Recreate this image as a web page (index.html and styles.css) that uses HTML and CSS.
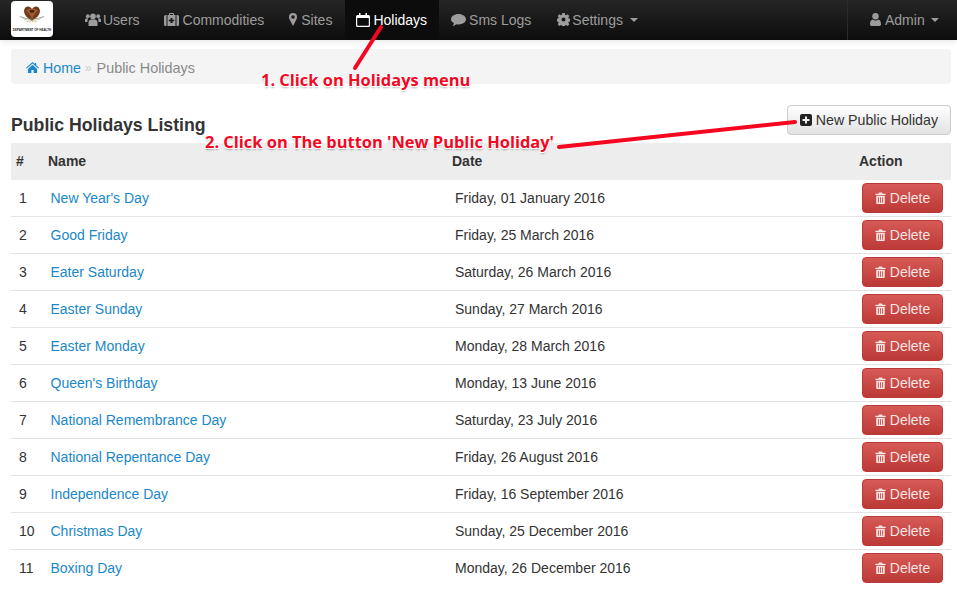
FILE: index.html
```html
<!DOCTYPE html>
<html lang="en">
<head>
<meta charset="utf-8">
<title>Public Holidays</title>
<link rel="stylesheet" href="styles.css">
</head>
<body>
<svg width="0" height="0" class="defs">
  <symbol id="trash" viewBox="0 0 12 14"><path d="M4.3 0.5h3.4l.8 1.5H11.500a.5.5 0 0 1 .5.5V3.500H0V2.500a.5.5 0 0 1 .5-.5H3.500zM1 4.500h10v8.200c0 .8-.5 1.300-1.200 1.300H2.200C1.500 14 1 13.500 1 12.700zM3 6v6.500h1V6zM5.500 6v6.500h1V6zM8 6v6.500h1V6z" fill-rule="evenodd"/></symbol>
</svg>
<nav class="navbar">
  <div class="brand">
    <svg class="crest" viewBox="0 0 42 36" aria-hidden="true">
      <path d="M21 26C14 22 9 17 10 11 11 6 16 5 19 7.500L21 10l2-2.500C26 5 31 6 32 11 33 17 28 22 21 26z" fill="#6e3a20"/>
      <path d="M13 12c3-4 13-4 16 0-2 2-4 3-5 6l-3 5-3-5c-1-3-3-4-5-6z" fill="#a65a2a"/>
      <path d="M17 11h8l-2 4h-4z" fill="#3c2416"/>
      <path d="M4 20c7 3 12 3.500 17 3.500S31 23 38 20" fill="none" stroke="#77775a" stroke-width="1"/>
      <path d="M8 23c5 2 9 2.500 13 2.500s8-.5 13-2.500" fill="none" stroke="#a8a890" stroke-width=".8"/>
      <path d="M14 27.500h14" stroke="#c9b458" stroke-width="1.500" stroke-dasharray="1.500 .8"/>
    </svg>
    <span class="crest-text">DEPARTMENT OF HEALTH</span>
  </div>
  <ul class="nav-left">
    <li><a class="nav-link" href="#"><svg class="ic ic-users" viewBox="0 0 16 13"><circle cx="8" cy="3.400" r="2.800"/><circle cx="2.800" cy="3.200" r="1.900"/><circle cx="13.200" cy="3.200" r="1.900"/><path d="M3.500 13V9.500C3.500 7.500 5 6.500 6 6.500h4c1 0 2.500 1 2.500 3V13zM0 9V7c0-1 .8-1.700 1.700-1.700h1.500C2.600 6.200 2.500 7.500 2.500 9zM16 9V7c0-1-.8-1.700-1.700-1.700h-1.500c.6.900.7 2.200.7 3.700z"/></svg>Users</a></li>
    <li><a class="nav-link wide-1" href="#"><svg class="ic ic-med" viewBox="0 0 15 13"><path fill-rule="evenodd" d="M5 2V1a1 1 0 0 1 1-1h3a1 1 0 0 1 1 1v1h1.500v11h-8V2zM6 1v1h3V1zM6.500 5v1.700H4.800v1.600h1.700V10h2V8.300h1.700V6.700H8.500V5zM0 3.500A1.500 1.500 0 0 1 1.500 2h1v11h-1A1.500 1.500 0 0 1 0 11.500zM15 3.500A1.500 1.500 0 0 0 13.500 2h-1v11h1a1.500 1.500 0 0 0 1.500-1.500z"/></svg>Commodities</a></li>
    <li><a class="nav-link wide-1" href="#"><svg class="ic ic-pin" viewBox="0 0 8 13"><path fill-rule="evenodd" d="M4 0a4 4 0 0 1 4 4c0 1.500-.5 2.300-1 3.300L4 13 1 7.300C.5 6.300 0 5.500 0 4a4 4 0 0 1 4-4zm0 2.200a1.800 1.800 0 1 0 0 3.600 1.800 1.800 0 0 0 0-3.600z"/></svg>Sites</a></li>
    <li class="active"><a class="nav-link" href="#"><svg class="ic ic-cal" viewBox="0 0 14 14"><path fill-rule="evenodd" d="M3 0h1.500v2h5V0H11v2h1.500A1.500 1.500 0 0 1 14 3.500v9a1.500 1.500 0 0 1-1.500 1.500h-11A1.500 1.500 0 0 1 0 12.500v-9A1.500 1.500 0 0 1 1.500 2H3zM1.200 5v7.300c0 .3.200.5.500.5h10.600c.3 0 .5-.2.500-.5V5z"/></svg>Holidays</a></li>
    <li><a class="nav-link wide-2" href="#"><svg class="ic ic-chat" viewBox="0 0 15 12"><path d="M7.500 0C11.600 0 15 2.300 15 5.200s-3.400 5.200-7.500 5.200c-.8 0-1.500-.1-2.200-.2C4.200 11.200 2.800 11.800 1.500 12c.8-.9 1.300-1.800 1.400-2.900C1.100 8.100 0 6.800 0 5.200 0 2.300 3.400 0 7.500 0z"/></svg>Sms Logs</a></li>
    <li><a class="nav-link" href="#"><svg class="ic ic-cog" viewBox="0 0 14 14"><path fill-rule="evenodd" d="M5.700 0h2.600l.4 2 1.100.5 1.700-1.100 1.800 1.800-1.100 1.700.5 1.100 2 .4v2.600l-2 .4-.5 1.100 1.100 1.700-1.800 1.800-1.700-1.100-1.100.5-.4 2H5.700l-.4-2-1.100-.5-1.700 1.100L.7 12.200l1.100-1.700-.5-1.100-2-.4V6.400l2-.4.5-1.100L.7 3.200 2.500 1.400l1.700 1.100L5.300 2zM7 4.800a2.200 2.200 0 1 0 0 4.400 2.200 2.200 0 0 0 0-4.400z"/></svg>Settings<span class="caret"></span></a></li>
  </ul>
  <div class="nav-right">
    <a class="nav-link" href="#"><svg class="ic ic-user" viewBox="0 0 11 13"><circle cx="5.500" cy="3.300" r="3.200"/><path d="M0 11.300C0 8.500 1 6.800 2.600 6.400 3.300 7.100 4.300 7.500 5.500 7.500s2.200-.4 2.900-1.100C10 6.800 11 8.500 11 11.300c0 1-.7 1.700-1.600 1.700H1.600C.7 13 0 12.300 0 11.300z"/></svg>Admin<span class="caret caret-tight"></span></a>
  </div>
</nav>

<main class="page">
  <div class="breadcrumb">
    <a href="#"><svg class="ic-home" viewBox="0 0 14 12"><path d="M7 0l2.500 2.200V1H11v2.500L14 6.200l-.8.8L7 1.600.8 7 0 6.200zM2 7.500 7 3l5 4.500V12H8.200V8.700H5.800V12H2z"/></svg>Home</a>
    <span class="sep">»</span>
    <span class="current">Public Holidays</span>
  </div>

  <div class="title-row">
    <h1>Public Holidays Listing</h1>
    <a class="btn btn-new" href="#"><svg class="ic-plus" viewBox="0 0 12 12"><path fill-rule="evenodd" d="M2 0h8a2 2 0 0 1 2 2v8a2 2 0 0 1-2 2H2a2 2 0 0 1-2-2V2a2 2 0 0 1 2-2zm3 2.500V5H2.500v2H5v2.500h2V7h2.500V5H7V2.500z"/></svg>New Public Holiday</a>
  </div>

  <table class="listing">
    <colgroup><col class="c-num"><col class="c-name"><col class="c-date"><col class="c-act"></colgroup>
    <thead><tr><th>#</th><th>Name</th><th>Date</th><th>Action</th></tr></thead>
    <tbody>
      <tr><td>1</td><td><a href="#">New Year's Day</a></td><td>Friday, 01 January 2016</td><td><a class="btn btn-del" href="#"><svg class="ic-trash"><use href="#trash"/></svg>Delete</a></td></tr>
      <tr><td>2</td><td><a href="#">Good Friday</a></td><td>Friday, 25 March 2016</td><td><a class="btn btn-del" href="#"><svg class="ic-trash"><use href="#trash"/></svg>Delete</a></td></tr>
      <tr><td>3</td><td><a href="#">Eater Saturday</a></td><td>Saturday, 26 March 2016</td><td><a class="btn btn-del" href="#"><svg class="ic-trash"><use href="#trash"/></svg>Delete</a></td></tr>
      <tr><td>4</td><td><a href="#">Easter Sunday</a></td><td>Sunday, 27 March 2016</td><td><a class="btn btn-del" href="#"><svg class="ic-trash"><use href="#trash"/></svg>Delete</a></td></tr>
      <tr><td>5</td><td><a href="#">Easter Monday</a></td><td>Monday, 28 March 2016</td><td><a class="btn btn-del" href="#"><svg class="ic-trash"><use href="#trash"/></svg>Delete</a></td></tr>
      <tr><td>6</td><td><a href="#">Queen's Birthday</a></td><td>Monday, 13 June 2016</td><td><a class="btn btn-del" href="#"><svg class="ic-trash"><use href="#trash"/></svg>Delete</a></td></tr>
      <tr><td>7</td><td><a href="#">National Remembrance Day</a></td><td>Saturday, 23 July 2016</td><td><a class="btn btn-del" href="#"><svg class="ic-trash"><use href="#trash"/></svg>Delete</a></td></tr>
      <tr><td>8</td><td><a href="#">National Repentance Day</a></td><td>Friday, 26 August 2016</td><td><a class="btn btn-del" href="#"><svg class="ic-trash"><use href="#trash"/></svg>Delete</a></td></tr>
      <tr><td>9</td><td><a href="#">Independence Day</a></td><td>Friday, 16 September 2016</td><td><a class="btn btn-del" href="#"><svg class="ic-trash"><use href="#trash"/></svg>Delete</a></td></tr>
      <tr><td>10</td><td><a href="#">Christmas Day</a></td><td>Sunday, 25 December 2016</td><td><a class="btn btn-del" href="#"><svg class="ic-trash"><use href="#trash"/></svg>Delete</a></td></tr>
      <tr><td>11</td><td><a href="#">Boxing Day</a></td><td>Monday, 26 December 2016</td><td><a class="btn btn-del" href="#"><svg class="ic-trash"><use href="#trash"/></svg>Delete</a></td></tr>
    </tbody>
  </table>
</main>

<svg class="arrows" viewBox="0 0 957 595" aria-hidden="true">
  <line x1="381" y1="27" x2="355" y2="68"/>
  <line x1="559" y1="147" x2="795" y2="122"/>
</svg>
<div class="note note-1">1. Click on Holidays menu</div>
<div class="note note-2">2. Click on The button 'New Public Holiday'</div>
</body>
</html>
```
FILE: styles.css
```css
* { box-sizing: border-box; }
html, body { margin: 0; padding: 0; }
body {
  position: relative;
  height: 595px;
  overflow: hidden;
  background: #fff;
  color: #333;
  font: 14px/20px "Liberation Sans", Arial, sans-serif;
}
a { text-decoration: none; color: #1a87c9; }
.defs { position: absolute; }

.navbar {
  display: flex;
  height: 40px;
  background: linear-gradient(#262626, #0c0c0c);
  box-shadow: 0 1px 6px rgba(0,0,0,.12);
}
.brand {
  width: 42px;
  height: 36px;
  margin: 1px 0 0 11px;
  background: #fff;
  border-radius: 4px;
  display: flex;
  flex-direction: column;
  align-items: center;
  overflow: hidden;
}
.crest { width: 30px; height: 26px; flex: none; margin-top: 1px; }
.crest-text { font-size: 3px; line-height: 5px; font-weight: bold; color: #222; white-space: nowrap; }
.nav-left { display: flex; list-style: none; margin: 0 0 0 20px; padding: 0; flex: 1; }
.nav-left li { display: flex; }
.nav-link {
  display: flex;
  align-items: center;
  height: 39px;
  padding: 0 12px;
  color: #9d9d9d;
  white-space: nowrap;
}
.nav-left .wide-1 { padding-right: 13px; }
.nav-left .wide-2 { padding-right: 14px; }
.nav-left .active { background: #0c0c0c; }
.nav-left .active .nav-link { color: #fff; padding: 0 12px 0 11px; }
.ic { fill: currentColor; margin-right: 3px; flex: none; }
.ic-users { width: 16px; height: 13px; margin-right: 2px; }
.ic-med { width: 15px; height: 13px; margin-right: 4px; }
.ic-pin { width: 8px; height: 13px; margin-right: 4px; }
.ic-cal { width: 14px; height: 14px; margin-right: 3px; }
.ic-chat { width: 15px; height: 12px; }
.ic-cog { width: 13px; height: 13px; margin-right: 2px; }
.ic-user { width: 11px; height: 13px; margin-right: 4px; }
.caret {
  width: 0; height: 0;
  margin-left: 7px;
  border-left: 4px solid transparent;
  border-right: 4px solid transparent;
  border-top: 4px solid currentColor;
}
.caret-tight { margin-left: 6px; }
.nav-right { border-left: 1px solid #2a2a2a; width: 110px; padding-left: 10px; }

.page { padding: 9px 6px 0 11px; }
.breadcrumb {
  height: 35px;
  padding: 2px 15px 0;
  background: #f4f4f4;
  border-radius: 4px;
  font-size: 14.200px;
  display: flex;
  align-items: center;
  gap: 4px;
}
.breadcrumb a { color: #1a87c9; display: flex; align-items: center; }
.ic-home { width: 13px; height: 11px; fill: currentColor; margin-right: 4px; }
.sep { color: #ccc; font-size: 12px; }
.current { color: #8a8a8a; margin-left: 1px; font-size: 14.400px; }

.title-row {
  display: flex;
  justify-content: space-between;
  align-items: flex-end;
  margin-top: 21px;
  height: 30px;
}
h1 { margin: 0; font-size: 17.700px; line-height: 20px; font-weight: bold; color: #333; }
.btn { display: inline-flex; align-items: center; border-radius: 4px; white-space: nowrap; }
.btn-new {
  height: 30px;
  padding: 0 12px;
  color: #333;
  border: 1px solid #ccc;
  background: linear-gradient(#fff, #e2e2e2);
  font-size: 14.200px;
}
.ic-plus { width: 12px; height: 12px; fill: #222; margin-right: 4px; }

.listing {
  width: 940px;
  margin-top: 8px;
  border-collapse: separate;
  border-spacing: 0;
  table-layout: fixed;
}
.c-num { width: 32px; }
.c-name { width: 404px; }
.c-date { width: 407px; }
.c-act { width: 97px; }
.listing th {
  height: 37px;
  padding: 7px 5px 8px;
  text-align: left;
  background: #ededed;
  font-weight: bold;
  color: #333;
}
.listing td {
  height: 37px;
  padding: 3px 8px;
  border-bottom: 1px solid #e3e3e3;
  vertical-align: middle;
}
.listing td a:not(.btn) { margin-left: -0.500px; }
.listing tbody tr:last-child td { border-bottom-color: transparent; }
.btn-del {
  width: 81px;
  height: 30px;
  justify-content: center;
  color: #f4e4e4;
  border: 1px solid #b93a36;
  background: linear-gradient(#d65a56, #bc3936);
}
.ic-trash { width: 11px; height: 12px; fill: #f4e4e4; margin-right: 4px; }

.arrows { position: absolute; left: 0; top: 0; width: 957px; height: 595px; pointer-events: none; }
.arrows line { stroke: #f5071f; stroke-width: 4; stroke-linecap: round; }
.note {
  position: absolute;
  font: bold 16.450px/22px "Open Sans", "Noto Sans", sans-serif;
  color: #f5071f;
  white-space: nowrap;
  text-shadow: 1px 1px 0 #fff, -1px -1px 0 #fff, 1px -1px 0 #fff, -1px 1px 0 #fff, 0 2px 2px rgba(0,0,0,.3);
}
.note-1 { left: 261px; top: 69px; }
.note-2 { left: 205px; top: 131px; }
```
